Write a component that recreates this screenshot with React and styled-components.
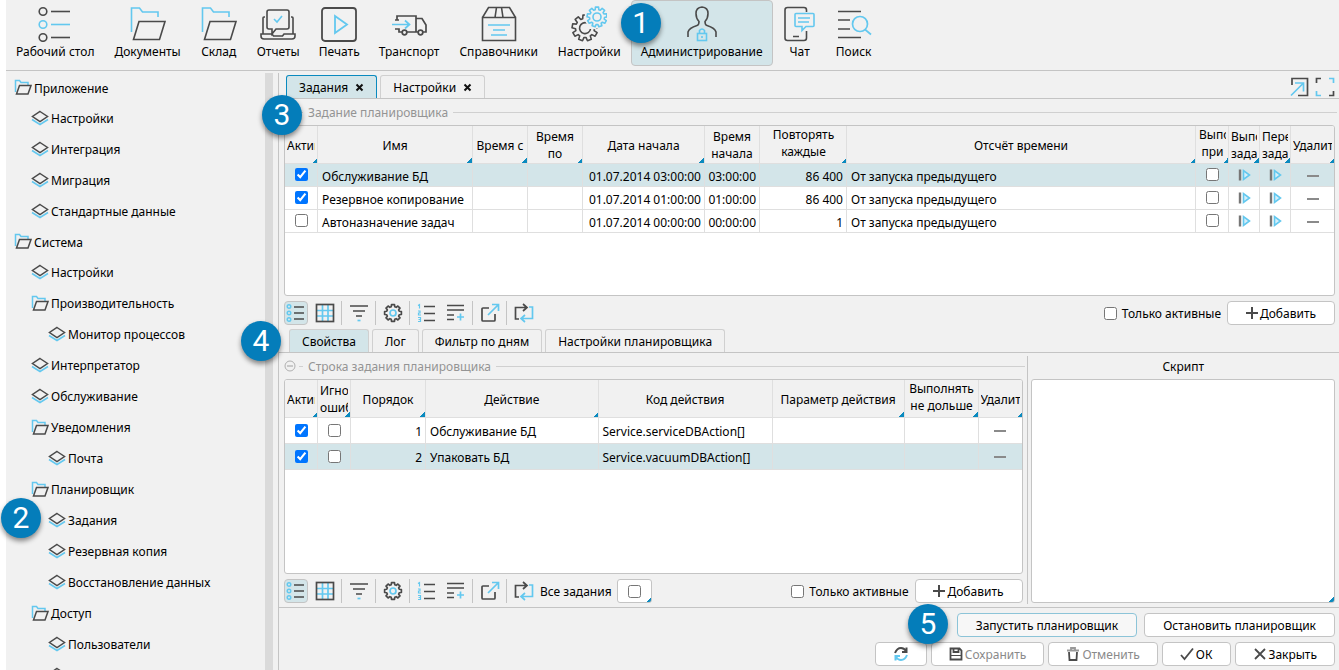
import React from 'react';
import styled, { createGlobalStyle, css } from 'styled-components';

const c = {
  panel: '#f1f1f1',
  line: '#c4c4c4',
  soft: '#dfdfdf',
  active: '#d3e5e9',
  accent: '#0a8abf',
  dark: '#4a4a4a',
  blue: '#63c8ef',
  muted: '#949494',
};

const GlobalStyle = createGlobalStyle`
  *, *::before, *::after { box-sizing: border-box; }
  body {
    margin: 0;
    background: #fff;
    color: #000;
    font: 12px/17px 'Noto Sans', 'Open Sans', sans-serif;
  }
  button, input, textarea { font: inherit; color: inherit; margin: 0; }
  a { color: inherit; text-decoration: none; }
`;

/* ---------- icons ---------- */

const Svg = styled.svg`
  flex: none;
  display: block;
  fill: none;
  stroke: ${c.dark};
  stroke-width: ${(p) => p.$w || 1.7};
  .b { stroke: ${c.blue}; }
`;

const Icon = ({ size = 20, box, w, children }) => (
  <Svg width={size} height={size} viewBox={`0 0 ${box || size} ${box || size}`} $w={w} aria-hidden="true">
    {children}
  </Svg>
);

const gear = (cx, cy, r1, r2, teeth) => {
  const pts = [];
  for (let i = 0; i < teeth; i += 1) {
    const a = (i * 2 * Math.PI) / teeth;
    const s = Math.PI / teeth;
    [[-0.7, r1], [-0.45, r2], [0.45, r2], [0.7, r1]].forEach(([k, r]) => {
      pts.push(`${(cx + r * Math.sin(a + s * k)).toFixed(2)} ${(cy - r * Math.cos(a + s * k)).toFixed(2)}`);
    });
  }
  return `M${pts.join('L')}Z`;
};

const navIcons = {
  desk: (
    <Icon size={36} w={1.6}>
      <circle cx="6" cy="5.5" r="3.8" /><path d="M14 5.5h19" />
      <g className="b"><circle cx="6" cy="18.5" r="3.8" /><path d="M14 18.5h19" /></g>
      <circle cx="6" cy="31.5" r="3.8" /><path d="M14 31.5h19" />
    </Icon>
  ),
  folder: (
    <Icon size={36} w={1.6}>
      <path className="b" d="M1.500 26V2h8l3 4H28v5" />
      <path d="M9 15.500h26L29.500 33.500H3.500z" />
    </Icon>
  ),
  reports: (
    <Icon size={36} w={1.6}>
      <path d="M5 11H4a1 1 0 0 0-1 1v16M31 11h1a1 1 0 0 1 1 1v16M9 4h18a2 2 0 0 1 2 2v15a2 2 0 0 1-2 2H16l-4 5v-5H9a2 2 0 0 1-2-2V6a2 2 0 0 1 2-2z" />
      <path d="M1 28h11l1.500 2h9l1.500-2h11v2q0 3-3 3H4q-3 0-3-3z" />
      <path className="b" d="M14 13l3 3 5-6" />
    </Icon>
  ),
  print: (
    <Icon size={36} w={1.8}>
      <rect x="1" y="2" width="34" height="33" rx="3" />
      <path className="b" d="M14 10v17l12-8.500z" />
    </Icon>
  ),
  truck: (
    <Icon size={36} w={1.7}>
      <path d="M4 14h4M6 14v-4h19v16H15.500M25 12.500h6l4 6.500v7h-3.500M27 26h-2M11 26H8v-3H4" />
      <path className="b" d="M1 18.500h17M14 14.500l4.500 4L14 22.500" />
      <circle cx="13.500" cy="26.500" r="2.300" /><circle cx="29.500" cy="26.500" r="2.300" />
    </Icon>
  ),
  box: (
    <Icon size={36} w={1.6}>
      <path d="M1.500 11.500v23h33v-23zM1.500 11.500l6-10h21l6 10M15.500 1.500l-1.500 10M20.500 1.500l1.500 10" />
      <path className="b" d="M7 19h22M12 24h12M10 29h16" />
    </Icon>
  ),
  gears: (
    <Icon size={36} w={1.6}>
      <path d={gear(14, 22, 9.500, 13, 9)} strokeLinejoin="round" />
      <path d="M16 17a5.500 5.500 0 1 0 3.500 6" />
      <path d={gear(26, 11, 8, 10.500, 9)} fill={c.panel} stroke={c.panel} strokeWidth="4" />
      <path className="b" d={gear(26, 11, 7.500, 10, 9)} strokeLinejoin="round" />
      <circle className="b" cx="26" cy="11" r="4" />
    </Icon>
  ),
  admin: (
    <Icon size={36} w={1.6}>
      <path d="M4 31v-5q1-4 9-6.500 2-.500 2-4-3-3-3-8 0-6 6-6.500 6 .500 6 6.500 0 5-3 8 0 3.500 2 4 8 2.500 9 6.500v5" />
      <g className="b"><rect x="13.500" y="27.500" width="9" height="7" /><path d="M15.500 27.500v-3q2.500-3 5 0v3M18 30v2" /></g>
    </Icon>
  ),
  chat: (
    <Icon size={36} w={1.6}>
      <path d="M24.500 6V4q0-2.500-2.500-2.500H5.500Q3 1.500 3 4v28q0 2.500 2.500 2.500H22q2.500 0 2.500-2.500v-7M11 30.500h6" />
      <path className="b" d="M14 7.500h17q1 0 1 1v11q0 1-1 1h-7l-4 4v-4h-6q-1 0-1-1v-11q0-1 1-1zM16 12h12M16 16h11" />
    </Icon>
  ),
  search: (
    <Icon size={36} w={1.7}>
      <path d="M2 5.500h23M2 14h12M2 23h12M2 31.500h23" />
      <circle className="b" cx="24" cy="18" r="7.500" /><path className="b" d="M29 23.500l6 5" />
    </Icon>
  ),
};

const TreeFolder = () => (
  <Icon size={18} w={1.5}>
    <path className="b" d="M1.500 13V1.500h4l1.500 2h7v3" />
    <path d="M5.500 6.500H17L14 15H2.500z" />
  </Icon>
);
const TreeLeaf = () => (
  <Icon size={18} w={1.5}>
    <path className="b" d="M1 9.500l8 5 8-5" />
    <path d="M9 1.500l7.500 5L9 11.500l-7.500-5z" />
  </Icon>
);

const tools = {
  list: (
    <Icon>
      <g className="b" strokeWidth="1.4"><circle cx="3" cy="3.500" r="1.800" /><circle cx="3" cy="10" r="1.800" /><circle cx="3" cy="16.500" r="1.800" /></g>
      <path d="M8 4h10M8 10h10M8 16h10" />
    </Icon>
  ),
  grid: (
    <Icon>
      <path className="b" d="M7.500 2v16M13 2v16M2 7.500h16M2 13h16" />
      <rect x="1.500" y="1.500" width="17" height="17" />
    </Icon>
  ),
  filter: <Icon><path d="M1 3h18M4 8h12M7 13h6" /><path className="b" d="M8.500 17.500h3" /></Icon>,
  gear: (
    <Icon>
      <path d={gear(10, 10, 6.500, 8.500, 8)} strokeLinejoin="round" />
      <circle className="b" cx="10" cy="10" r="3" />
    </Icon>
  ),
  numbers: (
    <Icon>
      <g className="b"><path strokeWidth="1.2" d="M1 2.500l1.500-1v4M1 8h2v2H1.500v2H4M1 14.500h2.500v4H1M1.500 16.500h2" /></g>
      <path d="M7 3.500h11M7 10.500h11M7 17.500h11" />
    </Icon>
  ),
  add: <Icon><path d="M1 2.500h17M1 7h17M1 12h7M1 16.500h7" /><path className="b" d="M14.500 10.500v7M11 14h7" /></Icon>,
  open: <Icon><path d="M9 5H3Q2 5 2 6v11q0 1 1 1h11q1 0 1-1v-6" /><path className="b" d="M8 12L18 2M12 1.500h6.500V8" /></Icon>,
  reload: (
    <Icon>
      <path d="M5 16H1.500V4.500H12M9 1l4 3.500L9 8" />
      <path className="b" d="M15 4h3.500v11.500H8M11 12l-4 3.500 4 3.500" />
    </Icon>
  ),
};

const Plus = () => <Icon size={12} w={2}><path d="M6 0v12M0 6h12" /></Icon>;
const Run = () => (
  <Icon size={14} w={1.6}>
    <path strokeWidth="2.400" stroke="#777" d="M3 1.500v11" />
    <path className="b" fill="#d4eefa" d="M6.500 2.500v9l6-4.500z" />
  </Icon>
);
const Minus = () => <Icon size={14} w={2}><path stroke="#8a8a8a" d="M1 8h12" /></Icon>;

/* ---------- shell ---------- */

const Shell = styled.div`
  height: 100vh;
  margin-left: 6px;
  display: flex;
  flex-direction: column;
  background: ${c.panel};
`;

const Badge = styled.span`
  position: absolute;
  z-index: 5;
  left: ${(p) => p.$left}px;
  top: ${(p) => p.$top}px;
  width: 40px;
  height: 40px;
  border-radius: 50%;
  background: #047dba;
  box-shadow: 0 3px 5px rgba(0, 0, 0, 0.45);
  color: #fff;
  font: 30px/40px Roboto, sans-serif;
  text-align: center;
`;

const NavBar = styled.nav`
  display: flex;
  flex: none;
  height: 71px;
  border-bottom: 1px solid ${c.line};
`;

const NavSlot = styled.div`
  position: relative;
`;

const NavButton = styled.button`
  display: flex;
  flex-direction: column;
  align-items: center;
  gap: 1px;
  min-width: 54px;
  height: 66px;
  padding: 5px ${(p) => (p.$narrow ? 8 : 9)}px 0;
  border: 1px solid ${(p) => (p.$active ? c.line : 'transparent')};
  border-radius: 4px;
  background: ${(p) => (p.$active ? c.active : 'transparent')};
  white-space: nowrap;
`;

const Body = styled.div`
  display: flex;
  flex: 1;
  min-height: 0;
  padding-top: 2px;
`;

const Side = styled.aside`
  position: relative;
  display: flex;
  flex: 0 0 272px;
  padding-right: 5px;
`;

const Tree = styled.ul`
  flex: 1;
  margin: 0;
  padding: 0;
  list-style: none;
  overflow: hidden;
`;

const TreeLink = styled.a`
  display: flex;
  align-items: center;
  gap: 2px;
  height: ${(p) => (p.$depth ? 31 : 30)}px;
  padding-left: ${(p) => 8 + p.$depth * 17}px;
  white-space: nowrap;
`;

const Track = styled.div`
  flex: 0 0 8px;
  background: #dadada;
`;

const Main = styled.main`
  position: relative;
  display: flex;
  flex: 1;
  flex-direction: column;
  min-width: 0;
  border-left: 1px solid ${c.line};
`;

/* ---------- tabs ---------- */

const TabBar = styled.div`
  display: flex;
  flex: none;
  align-items: flex-end;
  gap: 3px;
  padding: ${(p) => (p.$top ? '2px 4px 0 7px' : '0 2px 0 10px')};
  border-bottom: 1px solid ${c.line};
`;

const TabBox = styled.div`
  display: flex;
  align-items: center;
  gap: 7px;
  height: 23px;
  padding: 0 12px;
  border: 1px solid ${(p) => (p.$active && p.$closable ? c.accent : '#d0d0d0')};
  border-bottom: 0;
  border-radius: 3px 3px 0 0;
  background: ${(p) => (p.$active ? c.active : 'transparent')};
`;

const PlainButton = styled.button`
  display: flex;
  align-items: center;
  padding: 0;
  border: 0;
  background: none;
  white-space: nowrap;
`;

const Corner = styled.div`
  display: flex;
  gap: 6px;
  align-self: center;
  margin-left: auto;
`;

const Tab = ({ active, closable, children }) => (
  <TabBox $active={active} $closable={closable}>
    <PlainButton>{children}</PlainButton>
    {closable && (
      <PlainButton aria-label="Закрыть вкладку">
        <Icon size={9} w={2}><path stroke="#111" d="M1.500 1.500l6 6M7.500 1.500l-6 6" /></Icon>
      </PlainButton>
    )}
  </TabBox>
);

/* ---------- sections ---------- */

const Upper = styled.section`
  display: flex;
  flex: 230 1 0px;
  flex-direction: column;
  min-height: 0;
`;

const Lower = styled.section`
  display: flex;
  flex: 279 1 0px;
  flex-direction: column;
  min-height: 0;
`;

const Split = styled.div`
  display: grid;
  grid-template-columns: minmax(0, 12fr) 1px minmax(0, 5fr);
  flex: 1;
  min-height: 0;
  border-bottom: 1px solid ${c.line};
`;

const Pane = styled.div`
  display: flex;
  flex-direction: column;
  min-width: 0;
  min-height: 0;
`;

const Divider = styled.div`
  margin: 3px 0;
  background: ${c.line};
`;

const LegendRow = styled.div`
  display: flex;
  flex: none;
  align-items: center;
  height: 26px;
  padding: 0 2px 0 5px;
  color: ${c.muted};
  &::after {
    content: '';
    flex: 1;
    height: 1px;
    margin-left: 5px;
    background: #d0d0d0;
  }
`;

const Dash = styled.span`
  width: 4px;
  height: 1px;
  margin: 0 5px 0 3px;
  background: #d0d0d0;
`;

const Legend = ({ children }) => (
  <LegendRow>
    <PlainButton aria-label="Свернуть">
      <Icon size={12} w={1}><circle cx="6" cy="6" r="5" stroke="#b0b0b0" /><path stroke="#a0a0a0" d="M3 6h6" /></Icon>
    </PlainButton>
    <Dash />
    {children}
  </LegendRow>
);

/* ---------- data grids ---------- */

const Frame = styled.div`
  flex: 1;
  min-height: 0;
  margin: 0 4px 0 5px;
  border: 1px solid ${c.line};
  border-radius: 3px;
  background: #fff;
  overflow: hidden;
`;

const Table = styled.table`
  width: 100%;
  table-layout: fixed;
  border-collapse: separate;
  border-spacing: 0;
`;

const cellLines = css`
  border-right: 1px solid ${c.soft};
  border-bottom: 1px solid ${c.soft};
  &:last-child { border-right: 0; }
`;

const marker = css`
  background-image: linear-gradient(135deg, transparent 50%, ${c.accent} 50%);
  background-position: right bottom;
  background-repeat: no-repeat;
  background-size: 5px 5px;
`;

const Th = styled.th`
  ${cellLines}
  height: 38px;
  padding: ${(p) => (p.$tall ? '0 2px 3px 3px' : '1px 2px 0')};
  background-color: ${c.panel};
  background-clip: padding-box;
  font-weight: 400;
  text-align: center;
  white-space: pre;
  ${(p) => !p.$plain && marker}
  span {
    display: block;
    overflow: hidden;
  }
`;

const Tr = styled.tr`
  background: ${(p) => (p.$active ? c.active : '#fff')};
`;

const Td = styled.td`
  ${cellLines}
  height: ${(p) => p.$h}px;
  padding: 2px ${(p) => (p.$align === 'right' ? 3 : 4)}px 0;
  text-align: ${(p) => p.$align || 'left'};
  white-space: nowrap;
  overflow: hidden;
`;

const Mid = styled.div`
  display: flex;
  align-items: center;
  justify-content: center;
  padding-bottom: 3px;
`;

const Check = styled.input.attrs({ type: 'checkbox' })`
  flex: none;
  width: 13px;
  height: 13px;
`;

const Head = ({ cols }) => (
  <>
    <colgroup>
      {cols.map((col, i) => <col key={i} width={col.w} />)}
    </colgroup>
    <thead>
      <tr>
        {cols.map((col, i) => (
          <Th key={i} scope="col" $tall={col.tall} $plain={col.plain}><span>{col.t}</span></Th>
        ))}
      </tr>
    </thead>
  </>
);

const IconCell = ({ h, label, children }) => (
  <Td $h={h} $align="center"><Mid><PlainButton aria-label={label}>{children}</PlainButton></Mid></Td>
);
const CheckCell = ({ h, label, on }) => (
  <Td $h={h} $align="center"><Mid><Check aria-label={label} defaultChecked={on} /></Mid></Td>
);

const jobCols = [
  { t: 'Активно', w: 33 },
  { t: 'Имя', w: 155 },
  { t: 'Время с', w: 55 },
  { t: 'Время\nпо', w: 55 },
  { t: 'Дата начала', w: 122 },
  { t: 'Время\nначала', w: 55, plain: true },
  { t: 'Повторять\nкаждые', w: 87, tall: true },
  { t: 'Отсчёт времени' },
  { t: 'Выполнять\nпри', w: 33, tall: true },
  { t: 'Выполнить\nзадание', w: 31 },
  { t: 'Перезапуск\nзадания', w: 31 },
  { t: 'Удалить', w: 43 },
];

const jobs = [
  ['Обслуживание БД', '01.07.2014 03:00:00', '03:00:00', '86 400', true],
  ['Резервное копирование', '01.07.2014 01:00:00', '01:00:00', '86 400', true],
  ['Автоназначение задач', '01.07.2014 00:00:00', '00:00:00', '1', false],
];

const stepCols = [
  { t: 'Активно', w: 33 },
  { t: 'Игнорировать\nошибки', w: 33 },
  { t: 'Порядок', w: 75 },
  { t: 'Действие' },
  { t: 'Код действия', w: 174, plain: true },
  { t: 'Параметр действия', w: 132 },
  { t: 'Выполнять\nне дольше', w: 74, tall: true },
  { t: 'Удалить', w: 43 },
];

const steps = [
  ['1', 'Обслуживание БД', 'Service.serviceDBAction[]'],
  ['2', 'Упаковать БД', 'Service.vacuumDBAction[]'],
];

/* ---------- toolbars ---------- */

const ToolBar = styled.div`
  display: flex;
  flex: none;
  align-items: center;
  padding: 5px 4px 4px 5px;
`;

const ToolGroup = styled.div`
  display: flex;
  gap: 5px;
  & + & {
    margin-left: 4px;
    padding-left: 5px;
    border-left: 1px solid ${c.line};
  }
`;

const ToolButton = styled.button`
  display: flex;
  align-items: center;
  justify-content: center;
  width: 24px;
  height: 24px;
  padding: 0;
  border: 1px solid ${(p) => (p.$active ? c.line : 'transparent')};
  border-radius: 4px;
  background: ${(p) => (p.$active ? c.active : 'none')};
`;

const CheckLabel = styled.label`
  display: flex;
  align-items: center;
  gap: 5px;
  margin: 0 6px 0 auto;
  white-space: nowrap;
`;

const FieldLabel = styled.label`
  display: flex;
  align-items: center;
  gap: 5px;
  margin-left: 4px;
  white-space: nowrap;
`;

const CheckField = styled.span`
  display: flex;
  align-items: center;
  justify-content: center;
  width: 35px;
  height: 24px;
  border: 1px solid ${c.line};
  border-radius: 3px;
  background-color: #fff;
  ${marker}
`;

const Button = styled.button`
  display: flex;
  align-items: center;
  justify-content: center;
  gap: 2px;
  min-width: ${(p) => p.$min || 0}px;
  height: 24px;
  padding: 0 ${(p) => (p.$wide ? 18 : 17)}px;
  border: 1px solid ${(p) => (p.$focus ? '#8cc4d8' : c.line)};
  border-radius: 4px;
  background: ${(p) => (p.$focus ? '#f7f7f7' : '#fff')};
  color: ${(p) => (p.disabled ? '#8a8a8a' : '#000')};
  white-space: nowrap;
`;

const toolGroups = [
  [['list', 'Таблица'], ['grid', 'Сводная']],
  [['filter', 'Фильтр']],
  [['gear', 'Настройка таблицы']],
  [['numbers', 'Количество'], ['add', 'Сумма']],
  [['open', 'Экспорт']],
  [['reload', 'Обновить']],
];

const GridTools = ({ extra }) => (
  <ToolBar>
    {toolGroups.map((group, i) => (
      <ToolGroup key={i}>
        {group.map(([key, label]) => (
          <ToolButton key={key} $active={key === 'list'} aria-label={label}>{tools[key]}</ToolButton>
        ))}
      </ToolGroup>
    ))}
    {extra}
    <CheckLabel><Check />Только активные</CheckLabel>
    <Button $min={108}><Plus />Добавить</Button>
  </ToolBar>
);

/* ---------- script and footer ---------- */

const ScriptLabel = styled.label`
  flex: none;
  height: 26px;
  line-height: 28px;
  text-align: center;
`;

const ScriptArea = styled.textarea`
  flex: 1;
  min-height: 0;
  margin: 0 4px 4px 3px;
  border: 1px solid ${c.line};
  border-radius: 3px;
  background-color: #fff;
  resize: none;
  ${marker}
`;

const Footer = styled.footer`
  position: relative;
  display: flex;
  flex: none;
  flex-direction: column;
  gap: 5px;
  padding: 5px 4px 4px;
`;

const FooterRow = styled.div`
  display: flex;
  justify-content: flex-end;
  gap: ${(p) => p.$gap}px;
`;

const nav = [
  ['desk', 'Рабочий стол'],
  ['folder', 'Документы'],
  ['folder', 'Склад'],
  ['reports', 'Отчеты'],
  ['print', 'Печать'],
  ['truck', 'Транспорт'],
  ['box', 'Справочники'],
  ['gears', 'Настройки'],
  ['admin', 'Администрирование'],
  ['chat', 'Чат'],
  ['search', 'Поиск'],
];

const narrowIcons = ['print', 'chat', 'search'];

const tree = [
  [0, 'Приложение', true],
  [1, 'Настройки'],
  [1, 'Интеграция'],
  [1, 'Миграция'],
  [1, 'Стандартные данные'],
  [0, 'Система', true],
  [1, 'Настройки'],
  [1, 'Производительность', true],
  [2, 'Монитор процессов'],
  [1, 'Интерпретатор'],
  [1, 'Обслуживание'],
  [1, 'Уведомления', true],
  [2, 'Почта'],
  [1, 'Планировщик', true],
  [2, 'Задания'],
  [2, 'Резервная копия'],
  [2, 'Восстановление данных'],
  [1, 'Доступ', true],
  [2, 'Пользователи'],
  [2, 'Компании'],
];

export default function App() {
  return (
    <Shell>
      <GlobalStyle />
      <NavBar>
        {nav.map(([icon, label], i) => (
          <NavSlot key={i}>
            <NavButton $active={icon === 'admin'} $narrow={narrowIcons.includes(icon)}>
              {navIcons[icon]}
              {label}
            </NavButton>
            {icon === 'admin' && <Badge $left={-10} $top={3}>1</Badge>}
          </NavSlot>
        ))}
      </NavBar>
      <Body>
        <Side>
          <Tree>
            {tree.map(([depth, label, folder], i) => (
              <li key={i}>
                <TreeLink href="#" $depth={depth}>
                  {folder ? <TreeFolder /> : <TreeLeaf />}
                  {label}
                </TreeLink>
              </li>
            ))}
          </Tree>
          <Track />
          <Badge $left={-5} $top={425}>2</Badge>
        </Side>
        <Main>
          <Badge $left={-17} $top={22}>3</Badge>
          <TabBar $top>
            <Tab active closable>Задания</Tab>
            <Tab closable>Настройки</Tab>
            <Corner>
              <PlainButton aria-label="Открыть в окне">
                <Icon><path d="M3 8V1.500h15.500v17H9" /><path className="b" d="M2 18.500L14 6.500M6 6h8.500v8.500" /></Icon>
              </PlainButton>
              <PlainButton aria-label="Во весь экран">
                <Icon>
                  <path d="M1.500 6V1.500H6M18.500 14v4.500H14" /><path className="b" d="M14 1.500h4.500V6M6 18.500H1.500V14" />
                </Icon>
              </PlainButton>
            </Corner>
          </TabBar>
          <Upper>
            <Legend>Задание планировщика</Legend>
            <Frame>
              <Table>
                <Head cols={jobCols} />
                <tbody>
                  {jobs.map(([name, date, time, every, on], i) => (
                    <Tr key={name} $active={i === 0}>
                      <CheckCell h={23} label="Активно" on={on} />
                      <Td>{name}</Td>
                      <Td />
                      <Td />
                      <Td $align="right">{date}</Td>
                      <Td $align="right">{time}</Td>
                      <Td $align="right">{every}</Td>
                      <Td>От запуска предыдущего</Td>
                      <CheckCell h={23} label="Выполнять при старте" />
                      <IconCell h={23} label="Выполнить"><Run /></IconCell>
                      <IconCell h={23} label="Перезапустить"><Run /></IconCell>
                      <IconCell h={23} label="Удалить"><Minus /></IconCell>
                    </Tr>
                  ))}
                </tbody>
              </Table>
            </Frame>
            <GridTools />
          </Upper>
          <Lower>
            <TabBar>
              <Tab active>Свойства</Tab>
              <Tab>Лог</Tab>
              <Tab>Фильтр по дням</Tab>
              <Tab>Настройки планировщика</Tab>
            </TabBar>
            <Split>
              <Pane>
                <Legend>Строка задания планировщика</Legend>
                <Frame>
                  <Table>
                    <Head cols={stepCols} />
                    <tbody>
                      {steps.map(([n, action, code], i) => (
                        <Tr key={n} $active={i === 1}>
                          <CheckCell h={26} label="Активно" on />
                          <CheckCell h={26} label="Игнорировать ошибки" />
                          <Td $align="right">{n}</Td>
                          <Td>{action}</Td>
                          <Td>{code}</Td>
                          <Td />
                          <Td />
                          <IconCell h={26} label="Удалить"><Minus /></IconCell>
                        </Tr>
                      ))}
                    </tbody>
                  </Table>
                </Frame>
                <GridTools
                  extra={(
                    <FieldLabel>
                      Все задания
                      <CheckField><Check /></CheckField>
                    </FieldLabel>
                  )}
                />
              </Pane>
              <Divider />
              <Pane>
                <ScriptLabel htmlFor="script">Скрипт</ScriptLabel>
                <ScriptArea id="script" />
              </Pane>
            </Split>
          </Lower>
          <Badge $left={-38} $top={248}>4</Badge>
          <Footer>
            <FooterRow $gap={7}>
              <Button $focus $wide>Запустить планировщик</Button>
              <Button $wide>Остановить планировщик</Button>
            </FooterRow>
            <FooterRow $gap={4}>
              <Button $min={50} aria-label="Обновить">
                <Icon size={16} w={2}>
                  <path d="M2 7q2-5 6-5 3 0 5 3M13.500 1.500V6H9" />
                  <path className="b" d="M14 9q-2 5-6 5-3 0-5-3M2.500 14.500V10H7" />
                </Icon>
              </Button>
              <Button disabled>
                <Icon size={14} w={1.8}><path d="M1.500 1.500h9l2 2v9h-11zM4.500 2v3h5V2" /><path strokeWidth="1" d="M2 8.500h10" /></Icon>
                Сохранить
              </Button>
              <Button disabled>
                <Icon size={14} w={1.8}><path stroke="#999" d="M1 3.500h12M5 3V1h4v2" /><path d="M3 5l.5 8h7l.5-8" /></Icon>
                Отменить
              </Button>
              <Button>
                <Icon size={14} w={1.8}><path d="M1 8l3.500 4L13 1.500" /></Icon>
                ОК
              </Button>
              <Button>
                <Icon size={14} w={1.8}><path d="M2 2l10 10M12 2L2 12" /></Icon>
                Закрыть
              </Button>
            </FooterRow>
            <Badge $left={629} $top={-4}>5</Badge>
          </Footer>
        </Main>
      </Body>
    </Shell>
  );
}
